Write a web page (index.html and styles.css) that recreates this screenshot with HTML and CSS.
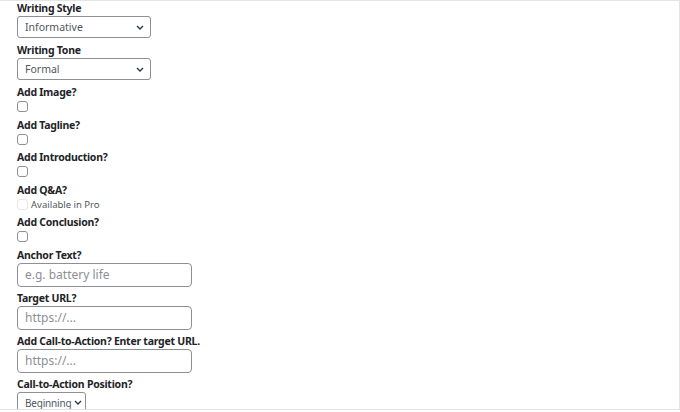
FILE: index.html
```html
<!DOCTYPE html>
<html lang="en">
<head>
    <meta charset="UTF-8">
    <title>Settings</title>
    <link rel="stylesheet" href="styles.css">
</head>
<body>
    <div class="panel">
        <div class="field">
            <label class="field-label">Writing Style</label>
            <div class="select wide">
                <span class="select-value">Informative</span>
                <svg class="chevron" viewBox="0 0 8 5"><path d="M1 1l3 3 3-3"/></svg>
            </div>
        </div>
        <div class="field">
            <label class="field-label">Writing Tone</label>
            <div class="select wide">
                <span class="select-value">Formal</span>
                <svg class="chevron" viewBox="0 0 8 5"><path d="M1 1l3 3 3-3"/></svg>
            </div>
        </div>
        <div class="field check-field">
            <label class="field-label" for="image">Add Image?</label>
            <div class="check-row"><input type="checkbox" id="image" class="check"></div>
        </div>
        <div class="field check-field">
            <label class="field-label" for="tagline">Add Tagline?</label>
            <div class="check-row"><input type="checkbox" id="tagline" class="check"></div>
        </div>
        <div class="field check-field">
            <label class="field-label" for="intro">Add Introduction?</label>
            <div class="check-row"><input type="checkbox" id="intro" class="check"></div>
        </div>
        <div class="field check-field">
            <label class="field-label" for="qa">Add Q&amp;A?</label>
            <div class="check-row"><input type="checkbox" id="qa" class="check" disabled><span class="pro-note">Available in Pro</span></div>
        </div>
        <div class="field check-field">
            <label class="field-label" for="conclusion">Add Conclusion?</label>
            <div class="check-row"><input type="checkbox" id="conclusion" class="check"></div>
        </div>
        <div class="field text-field">
            <label class="field-label" for="anchor">Anchor Text?</label>
            <input type="text" id="anchor" class="text-input" placeholder="e.g. battery life">
        </div>
        <div class="field text-field">
            <label class="field-label" for="target">Target URL?</label>
            <input type="text" id="target" class="text-input" placeholder="https://...">
        </div>
        <div class="field text-field">
            <label class="field-label" for="cta">Add Call-to-Action? Enter target URL.</label>
            <input type="text" id="cta" class="text-input" placeholder="https://...">
        </div>
        <div class="field">
            <label class="field-label">Call-to-Action Position?</label>
            <div class="select narrow">
                <span class="select-value">Beginning</span>
                <svg class="chevron" viewBox="0 0 8 5"><path d="M1 1l3 3 3-3"/></svg>
            </div>
        </div>
    </div>
</body>
</html>
```

FILE: styles.css
```css
body {
    margin: 0;
    font-family: "Noto Sans", "Open Sans", sans-serif;
    color: #1d2327;
    background: #fff;
}
.panel {
    height: 408px;
    overflow: hidden;
    border-top: 1px solid #e4e4e4;
    border-right: 1px solid #e4e4e4;
    border-bottom: 1px solid #e4e4e4;
    width: 662px;
    padding: 0 0 0 17px;
}
.field {
    margin-bottom: 5px;
}
.field-label {
    display: block;
    font-size: 10.5px;
    font-weight: 700;
    letter-spacing: -0.25px;
    line-height: 14px;
    margin-bottom: 1px;
}
.select {
    display: flex;
    align-items: center;
    justify-content: space-between;
    gap: 3px;
    box-sizing: border-box;
    height: 22px;
    padding: 0 6px 0 7px;
    border: 1px solid #8c8f94;
    border-radius: 3px;
    background: #fff;
    font-size: 10.5px;
    color: #50575e;
}
.select.wide {
    width: 134px;
}
.select.narrow {
    width: 69px;
    padding-right: 5px;
    margin-top: 1px;
    font-size: 10px;
    letter-spacing: -0.2px;
}
.select-value {
    white-space: nowrap;
}
.chevron {
    flex: none;
    width: 8px;
    height: 5px;
    fill: none;
    stroke: #2c3338;
    stroke-width: 1.3;
}
.check-field {
    margin-bottom: 4.5px;
}
.check-row {
    display: flex;
    align-items: center;
    height: 13px;
}
.check {
    appearance: none;
    -webkit-appearance: none;
    width: 11px;
    height: 11px;
    margin: 0;
    border: 1px solid #8c8f94;
    border-radius: 3px;
    background: #fff;
}
.check:disabled {
    border-color: #e6e7e8;
}
.pro-note {
    margin-left: 3px;
    font-size: 9.5px;
    color: #50575e;
}
.text-field {
    margin-bottom: 4px;
}
.text-input {
    display: block;
    box-sizing: border-box;
    width: 175px;
    height: 24px;
    margin: 0;
    padding: 0 7px;
    border: 1px solid #8c8f94;
    border-radius: 4px;
    font-family: inherit;
    font-size: 12px;
    color: #2c3338;
}
.text-input::placeholder {
    color: #8c8f94;
}
```
